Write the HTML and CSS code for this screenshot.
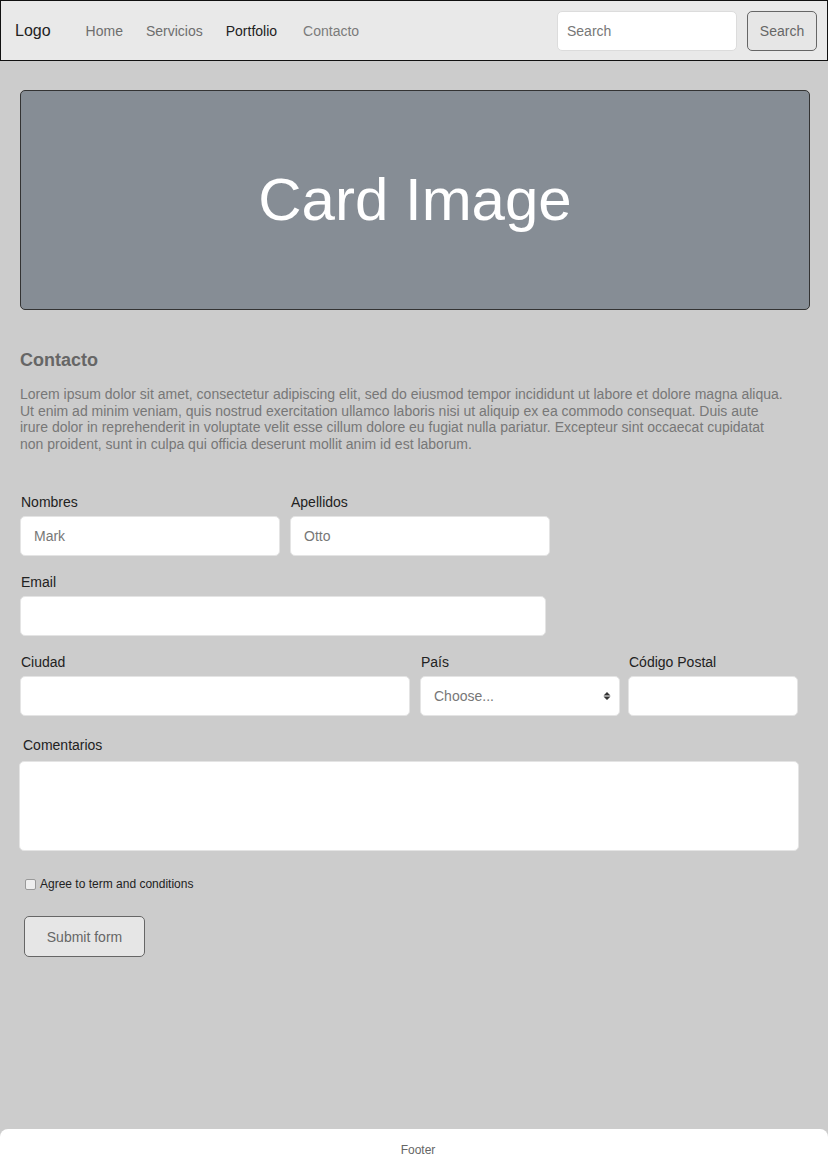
FILE: index.html
```html
<!DOCTYPE html>
<html lang="es">
<head>
<meta charset="utf-8">
<title>Contacto</title>
<link rel="stylesheet" href="styles.css">
</head>
<body>
<div class="page">
  <nav class="navbar">
    <a class="brand" href="#">Logo</a>
    <ul class="nav-links">
      <li><a href="#">Home</a></li>
      <li><a href="#">Servicios</a></li>
      <li><a class="active" href="#">Portfolio</a></li>
      <li><a class="muted" href="#">Contacto</a></li>
    </ul>
    <form class="search">
      <input class="search-input" type="text" placeholder="Search">
      <button class="search-btn" type="button">Search</button>
    </form>
  </nav>

  <main class="content">
    <div class="card-image">Card Image</div>

    <section class="intro">
      <h2 class="title">Contacto</h2>
      <p class="lead">Lorem ipsum dolor sit amet, consectetur adipiscing elit, sed do eiusmod tempor incididunt ut labore et dolore magna aliqua. Ut enim ad minim veniam, quis nostrud exercitation ullamco laboris nisi ut aliquip ex ea commodo consequat. Duis aute irure dolor in reprehenderit in voluptate velit esse cillum dolore eu fugiat nulla pariatur. Excepteur sint occaecat cupidatat non proident, sunt in culpa qui officia deserunt mollit anim id est laborum.</p>
    </section>

    <form class="contact-form">
      <div class="row row-names">
        <div class="field f-name">
          <label class="label">Nombres</label>
          <input class="control" type="text" placeholder="Mark">
        </div>
        <div class="field f-name">
          <label class="label">Apellidos</label>
          <input class="control" type="text" placeholder="Otto">
        </div>
      </div>
      <div class="row">
        <div class="field f-email">
          <label class="label">Email</label>
          <input class="control" type="email">
        </div>
      </div>
      <div class="row row-city">
        <div class="field f-city">
          <label class="label">Ciudad</label>
          <input class="control" type="text">
        </div>
        <div class="field f-country">
          <label class="label">País</label>
          <div class="control select">
            <span class="select-text">Choose...</span>
            <svg class="select-arrows" width="8" height="10" viewBox="0 0 8 10"><path d="M4 1 L7.5 4.5 H0.5 Z M4 9 L7.5 5.5 H0.5 Z" fill="#333"/></svg>
          </div>
        </div>
        <div class="field f-zip">
          <label class="label">Código Postal</label>
          <input class="control" type="text">
        </div>
      </div>
      <div class="row row-comments">
        <div class="field f-comments">
          <label class="label label-comments">Comentarios</label>
          <textarea class="control textarea"></textarea>
        </div>
      </div>
      <div class="check-row">
        <span class="checkbox"></span>
        <span class="check-label">Agree to term and conditions</span>
      </div>
      <button class="submit" type="button">Submit form</button>
    </form>
  </main>

  <footer class="footer">Footer</footer>
</div>
</body>
</html>
```

FILE: styles.css
```css
* { box-sizing: border-box; }
html, body { margin: 0; padding: 0; }
body {
  background: #cccccc;
  font-family: "Liberation Sans", Arial, sans-serif;
}
.page {
  min-height: 1170px;
  display: flex;
  flex-direction: column;
}
.navbar {
  height: 61px;
  background: #e9e9e9;
  border: 1px solid #111;
  display: flex;
  align-items: center;
  padding: 0 10px 0 14px;
}
.brand {
  font-size: 16px;
  color: #222;
  text-decoration: none;
  margin-right: 35px;
}
.nav-links {
  list-style: none;
  margin: 0;
  padding: 0;
  display: flex;
  flex: 1;
}
.nav-links a {
  font-size: 14px;
  color: #6e6e6e;
  text-decoration: none;
  margin-right: 23px;
}
.nav-links a.active { color: #222; margin-right: 26px; }
.nav-links a.muted { color: #7b7b7b; }
.search { display: flex; gap: 10px; }
.search-input {
  width: 180px;
  height: 40px;
  border: 1px solid #dcdcdc;
  border-radius: 5px;
  background: #fff;
  padding: 0 9px;
  font-family: inherit;
  font-size: 14px;
}
.search-input::placeholder { color: #777; }
.search-btn {
  width: 70px;
  height: 40px;
  border: 1px solid #666;
  border-radius: 5px;
  background: #e6e6e6;
  color: #666;
  font-family: inherit;
  font-size: 14px;
}
.content {
  flex: 1;
  padding: 29px 18px 0 20px;
}
.card-image {
  height: 220px;
  background: #868d95;
  border: 1px solid #333;
  border-radius: 5px;
  color: #fff;
  font-size: 60px;
  display: flex;
  align-items: center;
  justify-content: center;
  padding-bottom: 2px;
}
.intro { margin-top: 40px; }
.title {
  margin: 0;
  font-size: 18px;
  font-weight: bold;
  color: #666;
}
.lead {
  margin: 15px 0 0;
  font-size: 14px;
  line-height: 16.5px;
  color: #777;
  max-width: 770px;
}
.contact-form { margin-top: 42px; }
.row {
  display: flex;
  gap: 10px;
  margin-bottom: 18px;
}
.field { display: flex; flex-direction: column; }
.label {
  font-size: 14px;
  color: #222;
  margin: 0 0 6px 1px;
  line-height: 16px;
}
.control {
  height: 40px;
  border: 1px solid #e4e4e4;
  border-radius: 5px;
  background: #fff;
  font-family: inherit;
  font-size: 14px;
  padding: 0 13px;
}
.control::placeholder { color: #777; }
.f-name { width: 260px; }
.f-email { width: 526px; }
.row-city { gap: 0; }
.f-city { width: 390px; margin-right: 10px; }
.f-country { width: 200px; margin-right: 8px; }
.f-zip { width: 170px; }
.select {
  display: flex;
  align-items: center;
  justify-content: space-between;
  padding: 0 8px 0 13px;
}
.select-text { color: #777; }
.row-comments { margin-left: -1px; margin-top: 21px; }
.label-comments { margin-left: 4px; margin-bottom: 8px; }
.f-comments { width: 780px; }
.textarea { height: 90px; resize: none; }
.check-row {
  display: flex;
  align-items: center;
  margin: 26px 0 0 5px;
}
.checkbox {
  width: 11px;
  height: 11px;
  border: 1px solid #999;
  border-radius: 2px;
  background: #eee;
  margin-right: 4px;
}
.check-label { font-size: 12px; color: #222; }
.submit {
  margin: 25px 0 0 4px;
  width: 121px;
  height: 41px;
  border: 1px solid #666;
  border-radius: 5px;
  background: #e6e6e6;
  color: #666;
  font-family: inherit;
  font-size: 14px;
}
.footer {
  height: 41px;
  background: #fff;
  border-radius: 8px 8px 0 0;
  display: flex;
  align-items: center;
  justify-content: center;
  padding-left: 8px;
  font-size: 12px;
  color: #666;
}
```
